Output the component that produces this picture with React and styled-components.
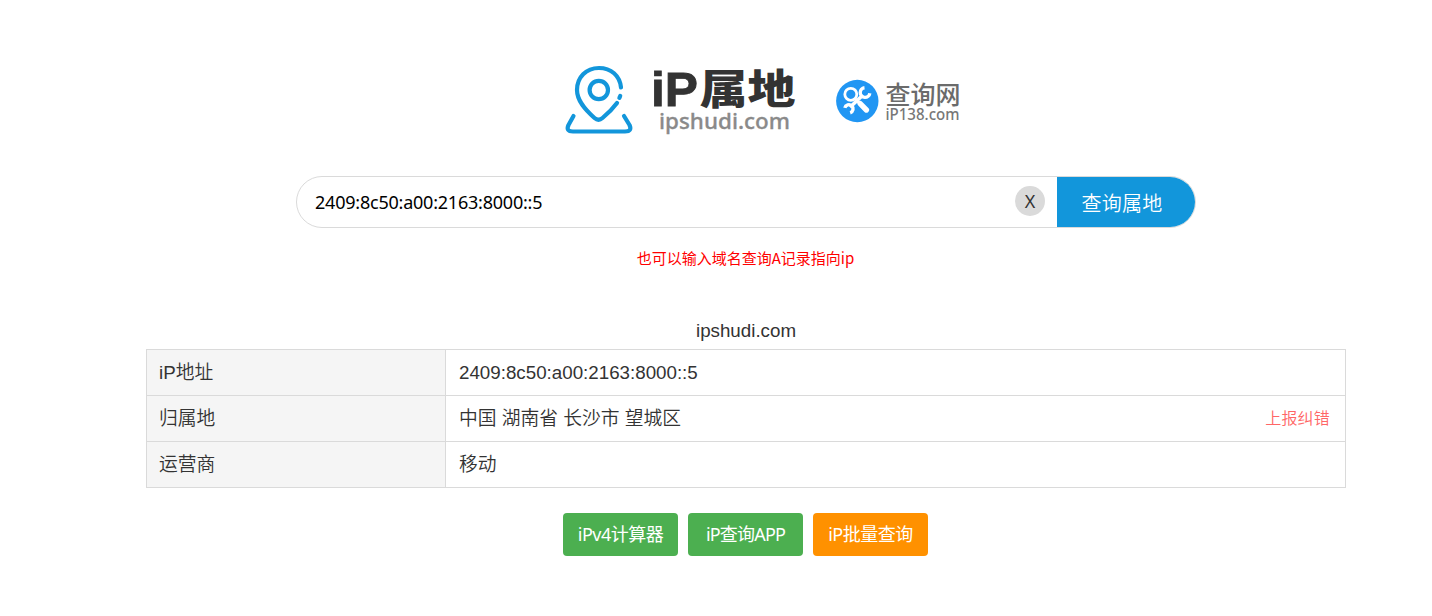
import React, { useState } from "react";
import styled, { createGlobalStyle } from "styled-components";

const GlobalStyle = createGlobalStyle`
  * { box-sizing: border-box; }
  body {
    margin: 0;
    background: #fff;
    color: #333;
    font: 18.75px/28px "Liberation Sans", "Noto Sans CJK SC", sans-serif;
  }
`;

const Page = styled.main`
  width: 1200px;
  margin-left: 146px;
  padding-top: 60px;
  display: flex;
  flex-direction: column;
  align-items: center;
`;

const LogoRow = styled.header`
  display: flex;
  height: 80px;
  width: 400px;
  margin-left: 28px;
`;

const SearchBar = styled.form`
  display: flex;
  align-items: center;
  width: 900px;
  height: 52px;
  margin-top: 36px;
  border: 1px solid #dadada;
  border-radius: 26px;
  overflow: hidden;
`;

const SearchInput = styled.input`
  flex: 1;
  min-width: 0;
  height: 50px;
  padding: 0 18px;
  border: 0;
  outline: 0;
  background: transparent;
  color: #000;
  font: 18px "Noto Sans", sans-serif;
  letter-spacing: -0.22px;
`;

const ClearButton = styled.button`
  width: 30px;
  height: 30px;
  margin: 0 12px 2px 0;
  padding: 0;
  border: 0;
  border-radius: 50%;
  background: #dadada;
  color: #333;
  font: 18px/28px "Noto Sans", sans-serif;
`;

const SubmitButton = styled.button`
  width: 138px;
  height: 50px;
  padding: 0 8px 0 0;
  border: 0;
  background: #1296db;
  color: #fff;
  font: 350 20px/51px "Noto Sans CJK SC", sans-serif;
  letter-spacing: 0.2px;
`;

const Hint = styled.p`
  margin: 18px 1px 0 0;
  color: #f00;
  font: 15px/24px "Noto Sans CJK SC", sans-serif;
`;

const Title = styled.h1`
  margin: 47px 0 4px;
  font-size: 18.75px;
  line-height: 28px;
  font-weight: 400;
`;

const Table = styled.dl`
  width: 1200px;
  margin: 0;
  border: 1px solid #dadada;
`;

const Row = styled.div`
  display: flex;
  height: 46px;
  line-height: 45px;
  & + & { border-top: 1px solid #dadada; }
  &:first-child { height: 45px; }
`;

const Label = styled.dt`
  width: 299px;
  padding-left: 12px;
  background: #f5f5f5;
  border-right: 1px solid #dadada;
  font-weight: 350;
`;

const Value = styled.dd`
  flex: 1;
  display: flex;
  justify-content: space-between;
  margin: 0;
  padding: 0 15px 0 13px;
  font-weight: 350;
`;

const ReportLink = styled.a`
  color: #f66;
  font-size: 16px;
  letter-spacing: 0.2px;
`;

const Actions = styled.nav`
  display: flex;
  gap: 10px;
  margin: 25px 1px 0 0;
`;

const ActionLink = styled.a`
  width: 115px;
  height: 43px;
  border-radius: 4px;
  background: ${(p) => p.$color};
  color: #fff;
  text-align: center;
  white-space: nowrap;
  font: 400 18px/42px "Noto Sans", "Noto Sans CJK SC", sans-serif;
  letter-spacing: ${(p) => p.$tracking}px;
`;

const rows = [
  { label: "iP地址", value: "2409:8c50:a00:2163:8000::5" },
  { label: "归属地", value: "中国 湖南省 长沙市 望城区", report: true },
  { label: "运营商", value: "移动" },
];

const actions = [
  { text: "iPv4计算器", color: "#4caf50", tracking: -0.5 },
  { text: "iP查询APP", color: "#4caf50", tracking: -0.8 },
  { text: "iP批量查询", color: "#ff9100", tracking: -0.5 },
];

const SiteLogo = () => (
  <svg width="240" height="80" viewBox="560 60 240 80" aria-label="iP属地">
    <g fill="none" stroke="#1296db" strokeWidth="4.2" strokeLinecap="round" strokeLinejoin="round">
      <path d="M621 87.5C619.8 75.5 611 68 599 68C586 68 577 77.5 577 90C577 101 585.5 110 594.5 118Q598.5 121.5 602.5 118Q611.5 110.5 617 103" />
      <path d="M620.2 96l-.8 1.8" />
      <circle cx="598.8" cy="90" r="9.2" />
      <path d="M573.5 116L568.5 125Q565.5 131.5 573 131.5H625Q632.5 131.5 629.5 125L624 116" />
    </g>
    <g fontWeight="900" fill="#333">
      <text x="651" y="106" fontFamily="Liberation Sans, sans-serif" fontSize="48" textLength="47" lengthAdjust="spacingAndGlyphs" stroke="#333" strokeWidth="0.8">iP</text>
      <text x="699.5" y="104" fontFamily="Noto Sans CJK SC, sans-serif" fontSize="41" textLength="96" lengthAdjust="spacingAndGlyphs">属地</text>
    </g>
    <text x="659" y="128.5" fontFamily="Noto Sans, sans-serif" fontSize="21.5" fontWeight="500" stroke="#8a8a8a" strokeWidth="0.3" fill="#8a8a8a" textLength="131" lengthAdjust="spacingAndGlyphs">ipshudi.com</text>
  </svg>
);

const PartnerLogo = () => (
  <svg width="160" height="80" viewBox="800 60 160 80" aria-label="查询网" overflow="visible">
    <circle cx="857.3" cy="101" r="21.2" fill="#2196f3" />
    <g stroke="#fff" fill="none">
      <path d="M850 107.2L863 95" strokeWidth="3.6" />
      <path d="M864.5 87.8A4.8 4.8 0 1 0 869.8 93.2" strokeWidth="3.4" />
      <path d="M844.8 107.8A4.2 4.2 0 1 1 850.2 112.8" strokeWidth="3.4" />
      <circle cx="850.8" cy="94.3" r="6" fill="#2196f3" strokeWidth="2.8" />
      <path d="M855.2 99L859 102.8" strokeWidth="3" />
      <path d="M860.2 103.7L866.4 110" strokeWidth="5.4" strokeLinecap="round" />
    </g>
    <text x="885.5" y="103.5" fontFamily="Noto Sans CJK SC, sans-serif" fontSize="25" fontWeight="500" fill="#6b6b6b" textLength="75" lengthAdjust="spacingAndGlyphs">查询网</text>
    <text x="885.5" y="119.7" fontFamily="Noto Sans, sans-serif" fontSize="15.5" fontWeight="500" fill="#777" textLength="74" lengthAdjust="spacingAndGlyphs">iP138.com</text>
  </svg>
);

export default function App() {
  const [query, setQuery] = useState("2409:8c50:a00:2163:8000::5");
  return (
    <>
      <GlobalStyle />
      <Page>
        <LogoRow>
          <SiteLogo />
          <PartnerLogo />
        </LogoRow>
        <SearchBar onSubmit={(e) => e.preventDefault()}>
          <SearchInput value={query} onChange={(e) => setQuery(e.target.value)} />
          <ClearButton type="button" onClick={() => setQuery("")}>X</ClearButton>
          <SubmitButton>查询属地</SubmitButton>
        </SearchBar>
        <Hint>也可以输入域名查询A记录指向ip</Hint>
        <Title>ipshudi.com</Title>
        <Table>
          {rows.map((r) => (
            <Row key={r.label}>
              <Label>{r.label}</Label>
              <Value>
                <span>{r.value}</span>
                {r.report && <ReportLink>上报纠错</ReportLink>}
              </Value>
            </Row>
          ))}
        </Table>
        <Actions>
          {actions.map((a) => (
            <ActionLink key={a.text} $color={a.color} $tracking={a.tracking}>{a.text}</ActionLink>
          ))}
        </Actions>
      </Page>
    </>
  );
}
